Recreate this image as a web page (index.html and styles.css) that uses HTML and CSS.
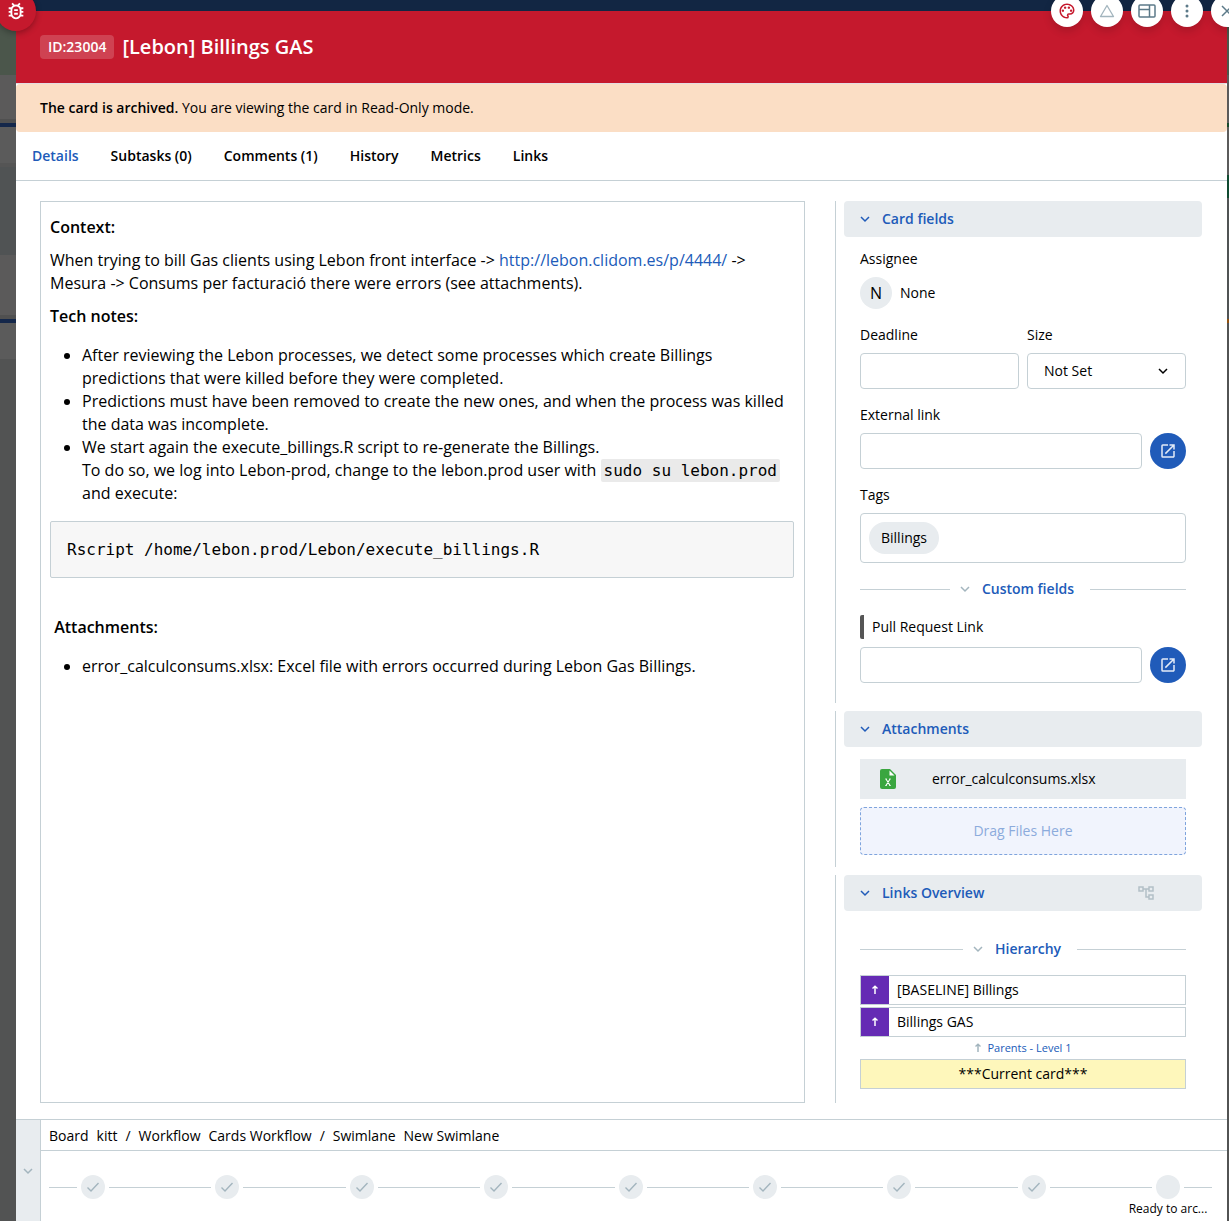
FILE: index.html
```html
<!DOCTYPE html>
<html lang="en">
<head>
<meta charset="utf-8">
<title>[Lebon] Billings GAS</title>
<meta name="viewport" content="width=device-width, initial-scale=1">
<link rel="stylesheet" href="styles.css">
</head>
<body>
<svg class="defs" aria-hidden="true">
  <symbol id="chevron" viewBox="0 0 10 10"><path d="M1 3l4 4 4-4" fill="none" stroke="currentColor" stroke-width="1.5"/></symbol>
  <symbol id="check" viewBox="0 0 14 14"><path d="M1.5 7.5l3.5 3.5 7.500-8" fill="none" stroke="currentColor" stroke-width="1.400"/></symbol>
  <symbol id="open" viewBox="0 0 24 24"><path fill="currentColor" d="M19 19H5V5h7V3H5a2 2 0 0 0-2 2v14a2 2 0 0 0 2 2h14c1.100 0 2-.9 2-2v-7h-2v7zM14 3v2h3.590l-9.830 9.830 1.410 1.410L19 6.410V10h2V3h-7z"/></symbol>
  <symbol id="up" viewBox="0 0 8 10"><path d="M4 9V2M1.500 3.500L4 1.300l2.500 2.200" fill="none" stroke="currentColor" stroke-width="1.500"/></symbol>
</svg>
<div class="board board-left"></div>
<main class="modal">
  <button class="bug" aria-label="Bug">
    <svg width="22" height="22" viewBox="0 0 24 24"><path fill="currentColor" d="M20 8h-2.810a5.985 5.985 0 0 0-1.820-1.960L17 4.410 15.590 3l-2.170 2.170a6.002 6.002 0 0 0-2.830 0L8.410 3 7 4.410l1.620 1.630C7.880 6.550 7.260 7.220 6.810 8H4v2h2.090c-.05.33-.09.66-.09 1v1H4v2h2v1c0 .34.04.67.09 1H4v2h2.810c1.040 1.790 2.970 3 5.190 3s4.150-1.210 5.190-3H20v-2h-2.090c.05-.33.09-.66.09-1v-1h2v-2h-2v-1c0-.34-.04-.67-.09-1H20V8zm-4 4v3c0 .22-.03.47-.07.7l-.1.65-.37.65c-.72 1.240-2.040 2-3.460 2s-2.740-.77-3.460-2l-.37-.64-.1-.65A4.600 4.600 0 0 1 8 15v-4c0-.23.03-.48.07-.7l.1-.65.37-.65c.3-.52.72-.97 1.210-1.310l.57-.39.74-.18a3.800 3.800 0 0 1 1.890 0l.68.16.61.42c.5.340.91.78 1.210 1.310l.38.65.1.65c.04.22.07.47.07.69v1zm-6 2h4v2h-4zm0-4h4v2h-4z"/></svg>
  </button>
  <div class="tools">
    <button class="tool tool-red" aria-label="Color"><svg width="18" height="18" viewBox="0 0 24 24"><path fill="currentColor" d="M12 22C6.490 22 2 17.510 2 12S6.490 2 12 2s10 4.040 10 9c0 3.310-2.690 6-6 6h-1.770c-.28 0-.5.22-.5.5 0 .12.05.23.13.33.41.47.64 1.060.64 1.670A2.500 2.500 0 0 1 12 22zm0-18c-4.410 0-8 3.590-8 8s3.590 8 8 8c.28 0 .5-.22.5-.5a.54.54 0 0 0-.14-.35c-.41-.46-.63-1.050-.63-1.650a2.500 2.500 0 0 1 2.500-2.500H16c2.210 0 4-1.790 4-4 0-3.860-3.590-7-8-7z"/><g fill="currentColor"><circle cx="6.500" cy="11.500" r="1.600"/><circle cx="9.500" cy="7.500" r="1.600"/><circle cx="14.500" cy="7.500" r="1.600"/><circle cx="17.500" cy="11.500" r="1.600"/></g></svg></button>
    <button class="tool tool-pale" aria-label="Priority"><svg width="16" height="14" viewBox="0 0 16 14"><path d="M8 1.500L14.500 12.500h-13z" fill="none" stroke="currentColor" stroke-width="1.300" stroke-linejoin="round"/></svg></button>
    <button class="tool" aria-label="Layout"><svg width="18" height="14" viewBox="0 0 18 14"><path d="M2 1h14a1 1 0 0 1 1 1v10a1 1 0 0 1-1 1H2a1 1 0 0 1-1-1V2a1 1 0 0 1 1-1zM1 5.500h10.500M11.500 1v12" fill="none" stroke="currentColor" stroke-width="1.500"/></svg></button>
    <button class="tool" aria-label="More"><svg width="4" height="14" viewBox="0 0 4 14"><g fill="currentColor"><circle cx="2" cy="2" r="1.500"/><circle cx="2" cy="7" r="1.500"/><circle cx="2" cy="12" r="1.500"/></g></svg></button>
    <button class="tool" aria-label="Close"><svg width="12" height="12" viewBox="0 0 12 12"><path d="M1 1l10 10M11 1L1 11" stroke="currentColor" stroke-width="1.500"/></svg></button>
  </div>

  <header class="head">
    <span class="card-id">ID:23004</span>
    <h1>[Lebon] Billings GAS</h1>
  </header>
  <p class="banner"><span><strong>The card is archived.</strong> You are viewing the card in Read-Only mode.</span></p>
  <nav class="tabs">
    <a class="active" href="#details">Details</a>
    <a href="#subtasks">Subtasks (0)</a>
    <a href="#comments">Comments (1)</a>
    <a href="#history">History</a>
    <a href="#metrics">Metrics</a>
    <a href="#links">Links</a>
  </nav>

  <div class="content" id="details">
    <article class="description">
      <p><strong>Context:</strong></p>
      <p>When trying to bill Gas clients using Lebon front interface -&gt; <a href="http://lebon.clidom.es/p/4444/">http://lebon.clidom.es/p/4444/</a> -&gt; Mesura -&gt; Consums per facturació there were errors (see attachments).</p>
      <p><strong>Tech notes:</strong></p>
      <ul>
        <li>After reviewing the Lebon processes, we detect some processes which create Billings predictions that were killed before they were completed.</li>
        <li>Predictions must have been removed to create the new ones, and when the process was killed the data was incomplete.</li>
        <li>We start again the execute_billings.R script to re-generate the Billings.<br>To do so, we log into Lebon-prod, change to the lebon.prod user with <code>sudo su lebon.prod</code> and execute:</li>
      </ul>
      <pre>Rscript /home/lebon.prod/Lebon/execute_billings.R</pre>
      <p><strong>&nbsp;Attachments:</strong></p>
      <ul>
        <li>error_calculconsums.xlsx: Excel file with errors occurred during Lebon Gas Billings.</li>
      </ul>
    </article>

    <aside class="side">
      <section class="group">
        <h2 class="group-head"><svg class="chev"><use href="#chevron"/></svg>Card fields</h2>
        <div class="group-body fields">
          <div class="field">
            <span>Assignee</span>
            <div class="assignee"><span class="avatar">N</span>None</div>
          </div>
          <div class="pair">
            <div class="field">
              <label for="deadline">Deadline</label>
              <input id="deadline" type="text" readonly>
            </div>
            <div class="field">
              <label for="size">Size</label>
              <div class="select">
                <select id="size"><option>Not Set</option></select>
                <svg class="chev"><use href="#chevron"/></svg>
              </div>
            </div>
          </div>
          <div class="field">
            <label for="external">External link</label>
            <div class="with-button">
              <input id="external" type="text" readonly>
              <button class="open" aria-label="Open external link"><svg width="18" height="18"><use href="#open"/></svg></button>
            </div>
          </div>
          <div class="field">
            <span>Tags</span>
            <div class="tags"><span class="tag">Billings</span></div>
          </div>
          <h3 class="divider"><span><svg class="chev"><use href="#chevron"/></svg>Custom fields</span></h3>
          <div class="field">
            <label class="custom" for="pull">Pull Request Link</label>
            <div class="with-button">
              <input id="pull" type="text" readonly>
              <button class="open" aria-label="Open pull request"><svg width="18" height="18"><use href="#open"/></svg></button>
            </div>
          </div>
        </div>
      </section>

      <section class="group">
        <h2 class="group-head"><svg class="chev"><use href="#chevron"/></svg>Attachments</h2>
        <div class="group-body files">
          <a class="file" href="#file">
            <svg width="16" height="20" viewBox="0 0 16 20"><path d="M2 0h8l6 6v12a2 2 0 0 1-2 2H2a2 2 0 0 1-2-2V2a2 2 0 0 1 2-2z" fill="#3aa640"/><path d="M9.500 1.500v5h5z" fill="#fff"/><path d="M6 10l4 6.500M10 10l-4 6.500M5.300 10h1.500M9.200 10h1.500M5.300 16.500h1.500M9.200 16.500h1.500" stroke="#fff" stroke-width="1.100"/></svg>
            error_calculconsums.xlsx
          </a>
          <div class="drop">Drag Files Here</div>
        </div>
      </section>

      <section class="group last">
        <h2 class="group-head"><svg class="chev"><use href="#chevron"/></svg>Links Overview
          <button class="tree" aria-label="Show hierarchy"><svg width="16" height="16" viewBox="0 0 16 16"><path d="M1 2h4v4H1zM11 2h4v4h-4zM11 10h4v4h-4zM5 4h6M8 4v8h3" fill="none" stroke="currentColor" stroke-width="1.500"/></svg></button>
        </h2>
        <div class="group-body hierarchy">
          <h3 class="divider"><span><svg class="chev"><use href="#chevron"/></svg>Hierarchy</span></h3>
          <div class="cards">
            <a class="card" href="#baseline"><span class="level"><svg width="8" height="10"><use href="#up"/></svg></span>[BASELINE] Billings</a>
            <a class="card" href="#gas"><span class="level"><svg width="8" height="10"><use href="#up"/></svg></span>Billings GAS</a>
          </div>
          <p class="caption"><svg width="8" height="10"><use href="#up"/></svg>Parents - Level 1</p>
          <div class="card current">***Current card***</div>
        </div>
      </section>
    </aside>
  </div>

  <footer class="foot">
    <button class="collapse" aria-label="Collapse workflow"><svg class="chev"><use href="#chevron"/></svg></button>
    <div class="flow">
      <p class="crumbs"><span>Board</span><span>kitt</span><span>/</span><span>Workflow</span><span>Cards Workflow</span><span>/</span><span>Swimlane</span><span>New Swimlane</span></p>
      <div class="steps">
        <i class="line end"></i><span class="step"><b><svg width="14" height="14"><use href="#check"/></svg></b></span>
        <i class="line"></i><span class="step"><b><svg width="14" height="14"><use href="#check"/></svg></b></span>
        <i class="line"></i><span class="step"><b><svg width="14" height="14"><use href="#check"/></svg></b></span>
        <i class="line"></i><span class="step"><b><svg width="14" height="14"><use href="#check"/></svg></b></span>
        <i class="line"></i><span class="step"><b><svg width="14" height="14"><use href="#check"/></svg></b></span>
        <i class="line"></i><span class="step"><b><svg width="14" height="14"><use href="#check"/></svg></b></span>
        <i class="line"></i><span class="step"><b><svg width="14" height="14"><use href="#check"/></svg></b></span>
        <i class="line"></i><span class="step"><b><svg width="14" height="14"><use href="#check"/></svg></b></span>
        <i class="line"></i><span class="step"><b></b><span>Ready to arc...</span></span>
        <i class="line end"></i>
      </div>
    </div>
  </footer>
</main>
<div class="board board-right"></div>
</body>
</html>
```
FILE: styles.css
```css
:root {
  --blue: #205bb9;
  --line: #c5d0d5;
  --fill: #e8ecef;
  --slate: #5c7a89;
  --pale: #a3b5be;
  --red: #c5192d;
}

* { box-sizing: border-box; }

body {
  margin: 0;
  min-height: 100vh;
  padding-top: 11px;
  display: grid;
  grid-template-columns: 16px minmax(0, 1fr) 2px;
  background: #122643;
  color: #000;
  font: 14px/20px "Open Sans", sans-serif;
  overflow-x: hidden;
}

h1, h2, h3, p { margin: 0; }
a { color: inherit; text-decoration: none; }
strong { font-weight: 600; }
svg { display: block; flex: none; }
.defs { position: absolute; width: 0; height: 0; }
.chev { width: 10px; height: 10px; }

button {
  border: 0;
  padding: 0;
  display: flex;
  align-items: center;
  justify-content: center;
  font: inherit;
}

/* Dimmed board behind the card window */
.board-left {
  background: linear-gradient(#4b564b 64px, #5b5a5a 64px 108px, #505050 108px 112px, #14274a 112px 116px, #5b5b5b 116px 152px, #555 152px 156px, #505354 156px 244px, #5b5a5a 244px 304px, #505050 304px 308px, #14274a 308px 312px, #5b5b5b 312px 348px, #525353 348px);
}
.board-right {
  background: linear-gradient(#4b564b 64px, #5b5a5a 64px 112px, #174a2c 112px 116px, #5b5b5b 116px 164px, #0f4a30 164px 187px, #505354 187px 308px, #91500f 308px 312px, #525353 312px);
}

.modal {
  position: relative;
  display: flex;
  flex-direction: column;
  background: #fff;
}

.bug {
  position: absolute;
  left: -20px;
  top: -20px;
  width: 40px;
  height: 40px;
  border-radius: 50%;
  background: var(--red);
  color: #fff;
  box-shadow: 0 2px 6px rgba(0, 0, 0, .3);
}
.tools {
  position: absolute;
  right: -16px;
  top: -16px;
  display: flex;
  gap: 8px;
}
.tool {
  width: 32px;
  height: 32px;
  border-radius: 50%;
  background: #fff;
  color: var(--slate);
  box-shadow: 0 4px 8px rgba(0, 0, 0, .15);
}
.tool-red { color: var(--red); }
.tool-pale { color: var(--pale); }

.head {
  display: flex;
  align-items: center;
  gap: 8px;
  height: 73px;
  padding: 0 24px;
  border-bottom: 1px solid #e3dde2;
  background: var(--red);
  color: #fff;
}
.head h1 { font-size: 20px; line-height: 28px; font-weight: 600; }
.card-id {
  padding: 2px 8px;
  border-radius: 4px;
  background: rgba(255, 255, 255, .18);
  font-weight: 600;
}

.banner {
  padding: 14px 24px;
  border-radius: 4px;
  background: #fbdec5;
}

.tabs {
  display: flex;
  gap: 32px;
  padding: 14px 16px;
  border-bottom: 1px solid var(--line);
  font-weight: 600;
}
.tabs .active { color: var(--blue); }

.content {
  flex: 1;
  display: flex;
  gap: 30px;
  padding: 20px 25px 16px 24px;
}

.description {
  flex: 1;
  min-width: 0;
  padding: 14px 10px 14px 9px;
  border: 1px solid var(--line);
  font-size: 16px;
  line-height: 23px;
}
.description p { margin-bottom: 10px; }
.description ul { margin: 16px 0; padding-left: 32px; }
.description a { color: var(--blue); }
.description code,
.description pre { font-family: "DejaVu Sans Mono", monospace; font-size: 16px; }
.description code { padding: 2px 3px; border-radius: 2px; background: #eaeaea; }
.description pre {
  margin: 0 0 38px;
  padding: 16px;
  border: 1px solid var(--line);
  border-radius: 2px;
  background: #f7f7f7;
}

.side {
  flex: 0 0 367px;
  display: flex;
  flex-direction: column;
  gap: 8px;
}
.group { padding-left: 8px; border-left: 1px solid var(--line); }
.last { flex: 1; }
.group-head {
  display: flex;
  align-items: center;
  gap: 12px;
  height: 36px;
  padding: 0 16px;
  border-radius: 4px;
  background: var(--fill);
  color: var(--blue);
  font-size: 14px;
  font-weight: 600;
}
.tree { margin-left: auto; margin-right: 32px; background: none; color: #b3c0c7; }
.group-body {
  display: flex;
  flex-direction: column;
  padding: 12px 16px;
}

.fields { gap: 16px; padding-bottom: 20px; }
.field { display: flex; flex-direction: column; gap: 8px; flex: 1; min-width: 0; }
.pair, .with-button { display: flex; gap: 8px; }
.assignee { display: flex; align-items: center; gap: 8px; }
.avatar {
  width: 32px;
  border-radius: 50%;
  background: var(--fill);
  font-size: 16px;
  line-height: 32px;
  text-align: center;
}
input, select, .tags {
  width: 100%;
  min-width: 0;
  height: 36px;
  margin: 0;
  padding: 0 16px;
  border: 1px solid var(--line);
  border-radius: 4px;
  background: #fff;
  color: #000;
  font: inherit;
}
.select { display: grid; align-items: center; }
.select > * { grid-area: 1 / 1; }
.select select { appearance: none; }
.select .chev { justify-self: end; margin-right: 18px; pointer-events: none; }
.open {
  flex: none;
  width: 36px;
  height: 36px;
  border-radius: 50%;
  background: var(--blue);
  color: #e3ebf7;
}
.tags { height: auto; padding: 8px; }
.tag {
  display: inline-block;
  padding: 6px 12px;
  border-radius: 16px;
  background: var(--fill);
  vertical-align: top;
}
.custom { padding: 2px 8px; border-left: 4px solid #555; border-radius: 2px; }

.divider {
  display: flex;
  align-items: center;
  color: var(--blue);
  font-size: 14px;
  font-weight: 600;
}
.divider::before,
.divider::after { content: ""; flex: 1 1 0; height: 1px; background: var(--line); }
.divider::after { flex-basis: 6px; }
.divider span { display: flex; align-items: center; gap: 12px; padding: 0 16px 0 10px; }
.divider .chev { color: var(--pale); }

.files { gap: 8px; }
.file {
  display: flex;
  align-items: center;
  gap: 36px;
  height: 40px;
  padding: 0 20px;
  background: var(--fill);
}
.drop {
  padding: 13px;
  border: 1px dashed #7fa4dd;
  border-radius: 4px;
  background: #f1f4fd;
  color: #8cabdc;
  text-align: center;
}

.hierarchy { padding-top: 28px; }
.cards { display: flex; flex-direction: column; gap: 2px; margin-top: 16px; }
.card {
  display: flex;
  align-items: center;
  gap: 8px;
  height: 30px;
  border: 1px solid var(--line);
}
.level {
  display: flex;
  align-items: center;
  justify-content: center;
  width: 28px;
  height: 28px;
  background: #652bb4;
  color: #fff;
}
.caption {
  display: flex;
  align-items: center;
  justify-content: center;
  gap: 5px;
  color: var(--blue);
  font-size: 11px;
  line-height: 22px;
}
.caption svg { color: var(--pale); }
.current { justify-content: center; background: #fef7bb; }

.foot { display: flex; border-top: 1px solid var(--line); }
.collapse {
  width: 25px;
  border-right: 1px solid var(--line);
  background: var(--fill);
  color: var(--pale);
}
.flow { flex: 1; min-width: 0; }
.crumbs {
  display: flex;
  gap: 8px;
  padding: 6px 8px 4px;
  border-bottom: 1px solid var(--line);
}
.steps { display: flex; padding: 24px 15px 2px 8px; }
.line { flex: 1; height: 1px; margin-top: 12px; background: var(--line); }
.line.end { flex: 0 0 28px; }
.step {
  display: flex;
  flex-direction: column;
  align-items: center;
  width: 32px;
  height: 44px;
  font-size: 12px;
  white-space: nowrap;
}
.step b {
  display: flex;
  align-items: center;
  justify-content: center;
  width: 24px;
  height: 24px;
  border-radius: 50%;
  background: var(--fill);
  color: var(--pale);
}
```
